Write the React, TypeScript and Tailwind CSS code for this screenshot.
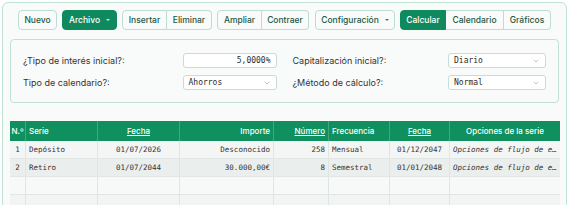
import { ChevronDown } from 'lucide-react'

const ui = "font-['Inter',_'Liberation_Sans',_sans-serif]"
const mono = "font-['DejaVu_Sans_Mono',_'Liberation_Mono',_monospace]"

function Btn({ label, w, active, caret, first, last, grouped }: { label: string; w: string; active?: boolean; caret?: boolean; first?: boolean; last?: boolean; grouped?: boolean }) {
    let radius = 'rounded-[4px]'
    if (grouped) radius = first ? 'rounded-l-[4px]' : last ? 'rounded-r-[4px] border-l-0' : 'border-l-0'
    const color = active ? 'bg-[#0f8a5e] border-[#0f8a5e] text-white' : 'bg-[#f9fbfa] border-[#bfdcd2] text-[#1e5744]'
    return (
        <div className={`${w} h-[20px] flex items-center justify-center gap-[6px] border ${radius} ${color} text-[8.5px] font-medium`}>
            <span>{label}</span>
            {caret && <span className="w-0 h-0 border-l-[2px] border-r-[2px] border-t-[2px] border-l-transparent border-r-transparent border-t-current opacity-80" />}
        </div>
    )
}

function Field({ value, right, select }: { value: string; right?: boolean; select?: boolean }) {
    return (
        <div className={`h-[15px] flex items-center border border-[#c6ddd5] rounded-[3px] bg-white px-[5px] ${mono} text-[8px] text-[#2b2b2b]`}>
            <span className={`flex-1 ${right ? 'text-right' : ''}`}>{value}</span>
            {select && <ChevronDown className="w-[8px] h-[8px] text-[#888]" strokeWidth={1.5} />}
        </div>
    )
}

const rows = [
    { n: '1', serie: 'Depósito', fecha: '01/07/2026', importe: 'Desconocido', numero: '258', frec: 'Mensual', fecha2: '01/12/2047', opc: 'Opciones de flujo de e…' },
    { n: '2', serie: 'Retiro', fecha: '01/07/2044', importe: '30.000,00€', numero: '8', frec: 'Semestral', fecha2: '01/01/2048', opc: 'Opciones de flujo de e…' },
]

const cols = 'grid grid-cols-[16px_72px_82px_94px_55px_61px_60px_110px]'

export default function App() {
    return (
        <div className={`w-[570px] h-[205px] overflow-hidden bg-white pt-[2px] pl-[2px] ${ui}`}>
            <div className="w-[565px] h-[220px] border border-[#bfe2d5] rounded-[6px] bg-[#f8fbfa] px-[7px] pt-[7px]">
                {/* Toolbar */}
                <div className="flex items-center ml-[8px]">
                    <Btn label="Nuevo" w="w-[39px]" />
                    <div className="w-[5px]" />
                    <Btn label="Archivo" w="w-[55px]" active caret />
                    <div className="w-[5px]" />
                    <Btn label="Insertar" w="w-[45px]" grouped first />
                    <Btn label="Eliminar" w="w-[45px]" grouped last />
                    <div className="w-[5px]" />
                    <Btn label="Ampliar" w="w-[45px]" grouped first />
                    <Btn label="Contraer" w="w-[47px]" grouped last />
                    <div className="w-[6px]" />
                    <Btn label="Configuración" w="w-[80px]" caret />
                    <div className="w-[5px]" />
                    <Btn label="Calcular" w="w-[46px]" active grouped first />
                    <Btn label="Calendario" w="w-[58px]" grouped />
                    <Btn label="Gráficos" w="w-[47px]" grouped last />
                </div>

                {/* Form */}
                <div className="mt-[9px] h-[64px] border border-[#c3e0d5] rounded-[4px] bg-[#f8fbfa] px-[12px] pt-[13px] text-[9px] text-[#333]">
                    <div className="grid grid-cols-2 gap-x-[16px] gap-y-[7px]">
                        <div className="flex items-center">
                            <span className="flex-1">¿Tipo de interés inicial?:</span>
                            <div className="w-[94px]"><Field value="5,0000%" right /></div>
                        </div>
                        <div className="flex items-center">
                            <span className="flex-1">Capitalización inicial?:</span>
                            <div className="w-[98px]"><Field value="Diario" select /></div>
                        </div>
                        <div className="flex items-center">
                            <span className="flex-1">Tipo de calendario?:</span>
                            <div className="w-[94px]"><Field value="Ahorros" select /></div>
                        </div>
                        <div className="flex items-center">
                            <span className="flex-1">¿Método de cálculo?:</span>
                            <div className="w-[98px]"><Field value="Normal" select /></div>
                        </div>
                    </div>
                </div>

                {/* Table */}
                <div className="mt-[18px] w-[550px]">
                    <div className={`${cols} h-[20px] bg-[#10905f] text-white text-[8px] font-medium`}>
                        <div className="flex items-center justify-center border-r border-[#3fa87f]">N.º</div>
                        <div className="flex items-center px-[3px] border-r border-[#3fa87f]">Serie</div>
                        <div className="flex items-center justify-center underline border-r border-[#3fa87f]">Fecha</div>
                        <div className="flex items-center justify-end px-[3px] border-r border-[#3fa87f]">Importe</div>
                        <div className="flex items-center justify-end px-[3px] underline border-r border-[#3fa87f]">Número</div>
                        <div className="flex items-center px-[3px] border-r border-[#3fa87f]">Frecuencia</div>
                        <div className="flex items-center justify-center underline border-r border-[#3fa87f]">Fecha</div>
                        <div className="flex items-center justify-center">Opciones de la serie</div>
                    </div>
                    {rows.map((r, i) => (
                        <div key={r.n} className={`${cols} h-[18px] ${i % 2 === 0 ? 'bg-[#f4f6f5]' : 'bg-[#eaeeec]'} border-b border-[#e0e6e3] ${mono} text-[7.5px] text-[#333]`}>
                            <div className="flex items-center justify-center border-r border-[#dfe5e2]">{r.n}</div>
                            <div className="flex items-center px-[3px] border-r border-[#dfe5e2]">{r.serie}</div>
                            <div className="flex items-center justify-center border-r border-[#dfe5e2]">{r.fecha}</div>
                            <div className="flex items-center justify-end px-[3px] border-r border-[#dfe5e2]">{r.importe}</div>
                            <div className="flex items-center justify-end px-[3px] border-r border-[#dfe5e2]">{r.numero}</div>
                            <div className="flex items-center px-[3px] border-r border-[#dfe5e2]">{r.frec}</div>
                            <div className="flex items-center justify-center border-r border-[#dfe5e2]">{r.fecha2}</div>
                            <div className="flex items-center px-[3px] italic whitespace-nowrap overflow-hidden">{r.opc}</div>
                        </div>
                    ))}
                    {[0, 1].map((k) => (
                        <div key={k} className={`${cols} h-[18px] ${k === 0 ? 'bg-[#f7f9f8]' : 'bg-[#f1f4f3]'} border-b border-[#e0e6e3]`}>
                            {Array.from({ length: 8 }).map((_, j) => (
                                <div key={j} className={j < 7 ? 'border-r border-[#dfe5e2]' : ''} />
                            ))}
                        </div>
                    ))}
                </div>
            </div>
        </div>
    )
}
